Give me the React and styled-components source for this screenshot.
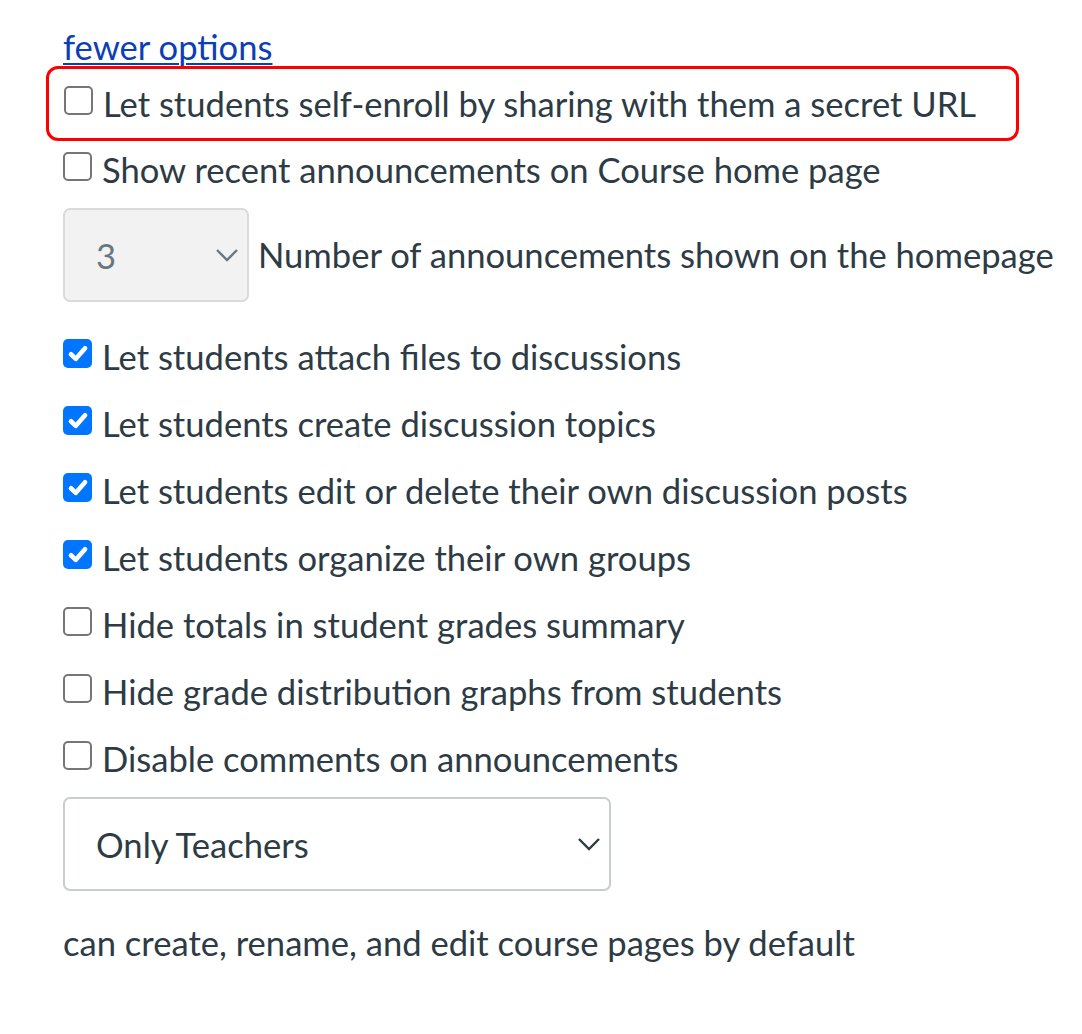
import React from "react";
import styled, { createGlobalStyle } from "styled-components";

const GlobalStyle = createGlobalStyle`
  body {
    margin: 0;
    background: #fff;
    font-family: Lato, "Noto Sans", sans-serif;
    color: #2d3b45;
  }
`;

const options = [
  { label: "Let students attach files to discussions", checked: true },
  { label: "Let students create discussion topics", checked: true },
  { label: "Let students edit or delete their own discussion posts", checked: true },
  { label: "Let students organize their own groups", checked: true },
  { label: "Hide totals in student grades summary", checked: false },
  { label: "Hide grade distribution graphs from students", checked: false },
  { label: "Disable comments on announcements", checked: false },
];

function CheckBox({ checked }) {
  return (
    <Box $checked={checked}>
      {checked && (
        <svg width="22" height="22" viewBox="0 0 20 20">
          <path
            d="M3.6 10.2 L8 14.4 L16.4 4.8"
            fill="none"
            stroke="#fff"
            strokeWidth="4.2"
            strokeLinecap="round"
            strokeLinejoin="round"
          />
        </svg>
      )}
    </Box>
  );
}

function Chevron({ color }) {
  return (
    <svg width="24" height="14" viewBox="0 0 24 14">
      <path d="M2 2 L12 12 L22 2" fill="none" stroke={color} strokeWidth="2.4" />
    </svg>
  );
}

export default function App() {
  return (
    <>
      <GlobalStyle />
      <Page>
        <MoreLink href="#">fewer options</MoreLink>
        <Highlight>
          <Row>
            <CheckBox checked={false} />
            <Label>Let students self-enroll by sharing with them a secret URL</Label>
          </Row>
        </Highlight>
        <Row>
          <CheckBox checked={false} />
          <Label>Show recent announcements on Course home page</Label>
        </Row>
        <SelectRow>
          <Select $disabled $width={186}>
            <span>3</span>
            <Chevron color="#6b7780" />
          </Select>
          <Label>Number of announcements shown on the homepage</Label>
        </SelectRow>
        <List>
          {options.map((o) => (
            <Row key={o.label}>
              <CheckBox checked={o.checked} />
              <Label>{o.label}</Label>
            </Row>
          ))}
        </List>
        <Select $width={548}>
          <span>Only Teachers</span>
          <Chevron color="#2d3b45" />
        </Select>
        <Note>can create, rename, and edit course pages by default</Note>
      </Page>
    </>
  );
}

const Page = styled.div`
  padding: 28px 0 40px 63px;
  display: flex;
  flex-direction: column;
  align-items: flex-start;
  font-size: 34.6px;
`;

const MoreLink = styled.a`
  color: #0c3fb5;
  text-decoration: underline;
  text-decoration-thickness: 2px;
  text-underline-offset: 3px;
  line-height: 38px;
`;

const Highlight = styled.div`
  margin: 0 0 -5px -17px;
  width: 973px;
  box-sizing: border-box;
  border: 3px solid #ff0000;
  border-radius: 12px;
  padding: 0 0 0 15px;
  height: 75px;
  display: flex;
  align-items: center;
`;

const Row = styled.div`
  display: flex;
  align-items: center;
  gap: 10px;
  height: 67px;
`;

const List = styled.div`
  display: flex;
  flex-direction: column;
  margin-top: 21px;
  margin-bottom: 5px;
`;

const Box = styled.span`
  box-sizing: border-box;
  width: 29px;
  height: 29px;
  flex: none;
  border-radius: 5px;
  margin-top: -6px;
  display: flex;
  align-items: center;
  justify-content: center;
  background: ${(p) => (p.$checked ? "#0075ff" : "#fff")};
  border: ${(p) => (p.$checked ? "none" : "2.5px solid #767676")};
`;

const Label = styled.span`
  white-space: nowrap;
  line-height: 48px;
`;

const SelectRow = styled.div`
  display: flex;
  align-items: center;
  gap: 9px;
  margin-top: 5px;
`;

const Select = styled.div`
  box-sizing: border-box;
  width: ${(p) => p.$width}px;
  height: 94px;
  display: flex;
  align-items: center;
  justify-content: space-between;
  padding: 0 8px 0 31px;
  border-radius: 7px;
  border: 2px solid ${(p) => (p.$disabled ? "#dadada" : "#c7cdd1")};
  background: ${(p) => (p.$disabled ? "#f2f2f2" : "#fff")};
  color: ${(p) => (p.$disabled ? "#6b7780" : "#2d3b45")};
  flex: none;
`;

const Note = styled.p`
  margin: 28px 0 0;
  line-height: 48px;
`;
